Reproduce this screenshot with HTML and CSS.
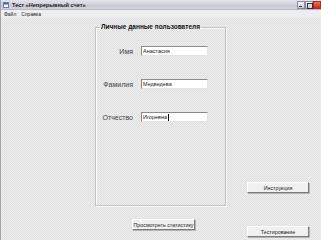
FILE: index.html
```html
<!DOCTYPE html>
<html lang="ru">
<head>
    <meta charset="UTF-8">
    <title>Тест «Непрерывный счет»</title>
    <link rel="stylesheet" href="styles.css">
</head>
<body>
    <div class="window">
        <div class="titlebar">
            <svg class="app-icon" width="6" height="6" viewBox="0 0 6 6">
                <rect x="0.5" y="0.5" width="5" height="5" fill="#ffffff" stroke="#6a7fb0"/>
                <rect x="1" y="1" width="4" height="1.5" fill="#3a62c0"/>
            </svg>
            <span class="title">Тест «Непрерывный счет»</span>
            <div class="controls">
                <span class="ctl min"></span>
                <span class="ctl max"></span>
                <span class="ctl close"></span>
            </div>
        </div>

        <div class="menubar">
            <span>Файл</span>
            <span>Справка</span>
        </div>

        <div class="content">
            <div class="main-col">
                <fieldset class="group">
                    <legend>Личные данные пользователя</legend>

                    <div class="row">
                        <label>Имя</label>
                        <div class="field">Анастасия</div>
                    </div>

                    <div class="row">
                        <label>Фамилия</label>
                        <div class="field">Медведева</div>
                    </div>

                    <div class="row">
                        <label>Отчество</label>
                        <div class="field">Игоревна<span class="caret"></span></div>
                    </div>
                </fieldset>

                <button class="btn stat-btn">Просмотреть статистику</button>
            </div>

            <div class="side-col">
                <button class="btn">Инструкция</button>
                <button class="btn test-btn">Тестирование</button>
            </div>
        </div>
    </div>
</body>
</html>
```

FILE: styles.css
```css
* {
    box-sizing: border-box;
    margin: 0;
    padding: 0;
    font-family: 'Liberation Sans', Arial, sans-serif;
}

body {
    width: 321px;
    height: 240px;
    overflow: hidden;
}

.window {
    height: 240px;
    border-left: 1px solid #a4a4a8;
    background: repeating-conic-gradient(#e1e1e1 0 25%, #ececec 0 50%) 0 0 / 2px 2px;
}

.titlebar {
    height: 10px;
    display: flex;
    align-items: center;
    padding-left: 2px;
    background: linear-gradient(to bottom, #e4e4ec, #cacad6 60%, #d2d2dc);
    border-bottom: 1px solid #b8b8c4;
}

.app-icon {
    margin-right: 3px;
}

.title {
    font-size: 5.6px;
    font-weight: bold;
    color: #222;
}

.controls {
    margin-left: auto;
    display: flex;
}

.ctl {
    width: 8px;
    height: 8px;
    border: 1px solid #8c8ca0;
    background: linear-gradient(#f4f4f8, #c8c8d4);
    position: relative;
}

.ctl.min::after {
    content: "";
    position: absolute;
    left: 1px;
    bottom: 1px;
    width: 3px;
    height: 1px;
    background: #333;
}

.ctl.max::after {
    content: "";
    position: absolute;
    left: 1px;
    top: 1px;
    width: 4px;
    height: 4px;
    border: 1px solid #333;
}

.ctl.close {
    background: linear-gradient(#f07060, #c82818);
    border-color: #a03020;
}

.menubar {
    height: 8px;
    display: flex;
    align-items: center;
    gap: 5px;
    padding-left: 3px;
    font-size: 5px;
    color: #222;
    background: #eeeef2;
}

.content {
    display: flex;
    padding-left: 94px;
}

.main-col {
    width: 131px;
    display: flex;
    flex-direction: column;
}

.group {
    margin-top: 5px;
    height: 183px;
    border: 1px solid #c2c2c2;
    box-shadow: inset 1px 1px #fafafa, 1px 1px #fafafa;
    padding: 15px 0 0 0;
}

.group legend {
    margin-left: 4px;
    padding: 0 1px;
    font-size: 6.5px;
    font-weight: bold;
    line-height: 8px;
    color: #111;
}

.row {
    display: flex;
    align-items: center;
    height: 10px;
    margin-bottom: 23px;
}

.row label {
    width: 37px;
    text-align: right;
    margin-right: 8px;
    font-size: 7px;
    color: #444;
}

.field {
    width: 67px;
    height: 10px;
    background: #fff;
    border: 1px solid;
    border-color: #8a8a8a #e4e4e4 #e4e4e4 #8a8a8a;
    font-size: 5.5px;
    line-height: 8px;
    padding-left: 1px;
    color: #222;
    display: flex;
    align-items: center;
}

.caret {
    display: inline-block;
    width: 1px;
    height: 7px;
    background: #000;
    margin-left: 0.5px;
}

.btn {
    height: 11px;
    padding: 0;
    white-space: nowrap;
    font-size: 5.3px;
    color: #222;
    background: #f0f0f0;
    border: 1px solid;
    border-color: #ffffff #7c7c7c #7c7c7c #ffffff;
    box-shadow: 1px 1px #b4b4b4;
}

.stat-btn {
    width: 63px;
    margin: 13px 0 0 37px;
}

.side-col {
    margin-left: 21px;
    display: flex;
    flex-direction: column;
    padding-top: 164px;
}

.side-col .btn {
    width: 62px;
}

.test-btn {
    margin-top: 33px;
}
```
